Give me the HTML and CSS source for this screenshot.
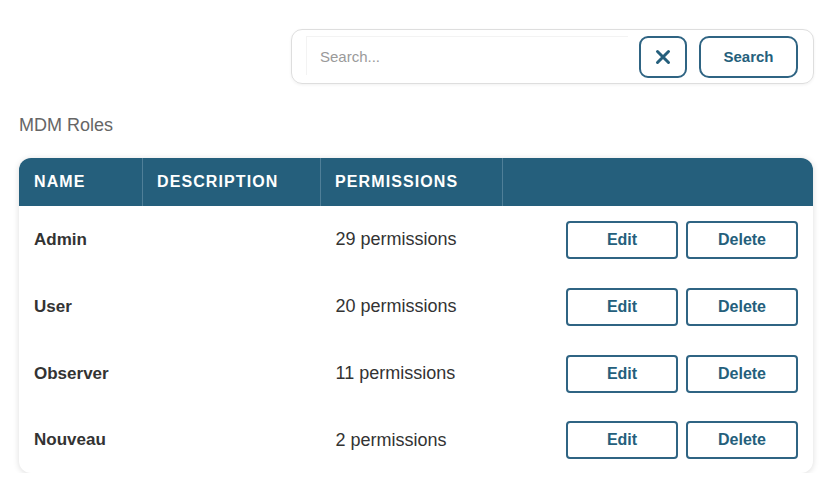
FILE: index.html
```html
<!DOCTYPE html>
<html>
<head>
    <meta charset="utf-8" />
    <link rel="stylesheet" href="styles.css">
</head>
<body>
<div class="page">
    <div class="search-row">
        <div class="search-box">
            <input class="search-input" placeholder="Search..." />
            <button class="btn-clear" title="Clear">
                <svg width="16" height="16" viewBox="0 0 16 16">
                    <path d="M2.5 2.5 L13.5 13.5 M13.5 2.5 L2.5 13.5" stroke="#255f7c" stroke-width="3" stroke-linecap="round"/>
                </svg>
            </button>
            <button class="btn-search">Search</button>
        </div>
    </div>

    <h2 class="title">MDM Roles</h2>

    <div class="roles">
        <table class="roles-table">
            <thead>
                <tr>
                    <th class="col-name">Name</th>
                    <th class="col-desc">Description</th>
                    <th class="col-perm">Permissions</th>
                    <th class="col-act"></th>
                </tr>
            </thead>
            <tbody>
                <tr>
                    <td class="name">Admin</td>
                    <td></td>
                    <td class="perm">29 permissions</td>
                    <td class="actions"><button class="btn">Edit</button><button class="btn">Delete</button></td>
                </tr>
                <tr>
                    <td class="name">User</td>
                    <td></td>
                    <td class="perm">20 permissions</td>
                    <td class="actions"><button class="btn">Edit</button><button class="btn">Delete</button></td>
                </tr>
                <tr>
                    <td class="name">Observer</td>
                    <td></td>
                    <td class="perm">11 permissions</td>
                    <td class="actions"><button class="btn">Edit</button><button class="btn">Delete</button></td>
                </tr>
                <tr class="last">
                    <td class="name">Nouveau</td>
                    <td></td>
                    <td class="perm">2 permissions</td>
                    <td class="actions"><button class="btn">Edit</button><button class="btn">Delete</button></td>
                </tr>
            </tbody>
        </table>
    </div>
</div>
</body>
</html>
```

FILE: styles.css
```css
body{
    margin: 0;
    background-color: white;
    font-family: "Liberation Sans", Arial, sans-serif;
    color: #333;
}
.page{
    padding: 29px 9px 0 19px;
}
.search-row{
    display: flex;
    justify-content: flex-end;
}
.search-box{
    display: flex;
    align-items: center;
    width: 523px;
    height: 55px;
    box-sizing: border-box;
    padding: 0 15px 0 14px;
    margin-right: -1px;
    border: 1px solid #dedede;
    border-radius: 11px;
    box-shadow: 0 1px 3px rgba(0,0,0,0.06);
}
.search-input{
    width: 322px;
    height: 39px;
    box-sizing: border-box;
    margin-top: -2px;
    padding: 0 13px;
    border: 1px solid #f3f3f3;
    border-right: none;
    border-bottom: none;
    outline: none;
    font-family: "Liberation Sans", Arial, sans-serif;
    font-size: 15px;
    color: #333;
}
.search-input::placeholder{
    color: #9a9a9a;
}
.btn-clear{
    display: flex;
    align-items: center;
    justify-content: center;
    width: 48px;
    height: 42px;
    margin-left: 11px;
    padding: 0;
    background: white;
    border: 2px solid #2f6483;
    border-radius: 9px;
    cursor: pointer;
}
.btn-search{
    width: 99px;
    height: 42px;
    margin-left: 12px;
    background: white;
    border: 2px solid #2f6483;
    border-radius: 10px;
    font-family: "Liberation Sans", Arial, sans-serif;
    font-size: 15px;
    font-weight: bold;
    color: #255f7c;
    cursor: pointer;
}
.title{
    margin: 30px 0 22px 0;
    font-size: 18px;
    font-weight: normal;
    color: #666;
    line-height: 22px;
}
.roles{
    border-radius: 12px;
    overflow: hidden;
    box-shadow: 0 1px 6px rgba(0,0,0,0.14);
}
.roles-table{
    width: 100%;
    border-collapse: collapse;
}
.roles-table th{
    height: 48px;
    padding: 0 14px;
    background-color: #255f7c;
    color: white;
    font-size: 16px;
    font-weight: bold;
    letter-spacing: 1.1px;
    text-transform: uppercase;
    text-align: left;
    border-left: 1px solid #4f7f98;
}
.roles-table th:first-child{
    border-left: none;
    padding-left: 15px;
}
.col-name{ width: 94px; }
.col-desc{ width: 149px; }
.col-perm{ width: 153px; }
.roles-table td{
    height: 67px;
    padding: 0 15px;
    vertical-align: middle;
}
.roles-table tr.last td{
    height: 66px;
}
.name{
    font-size: 17px;
    font-weight: bold;
    color: #333;
}
.perm{
    font-size: 18px;
    color: #333;
}
.actions{
    text-align: right;
    white-space: nowrap;
}
.btn{
    width: 112px;
    height: 38px;
    margin-left: 8px;
    background: white;
    border: 2px solid #2f6483;
    border-radius: 4px;
    font-family: "Liberation Sans", Arial, sans-serif;
    font-size: 16px;
    font-weight: bold;
    color: #255f7c;
    cursor: pointer;
}
```
